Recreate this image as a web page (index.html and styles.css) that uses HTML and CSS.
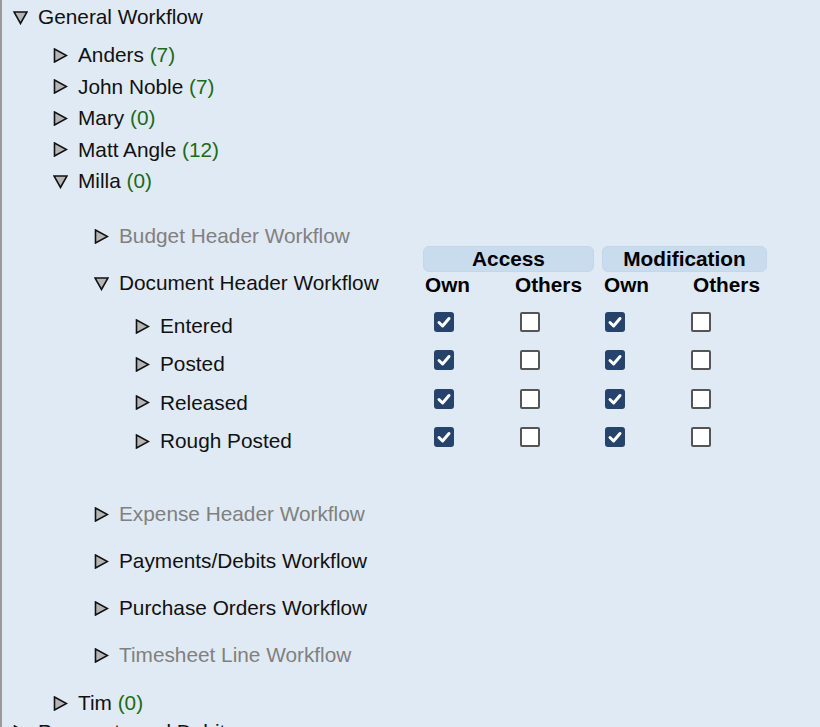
FILE: index.html
```html
<!DOCTYPE html>
<html>
<head>
<meta charset="utf-8">
<link rel="stylesheet" href="styles.css">
</head>
<body>
<div class="panel">
  <ul class="tree l0">
    <li class="node">
      <div class="row"><svg class="tw" viewBox="0 0 15 15"><polygon points="1,2 14,2 7.5,13.5"/></svg><span class="lbl">General Workflow</span></div>
      <ul class="tree l1">
        <li class="row"><svg class="tw" viewBox="0 0 15 15"><polygon points="1.5,1 1.5,14 13.5,7.5"/></svg><span class="lbl">Anders <span class="cnt">(7)</span></span></li>
        <li class="row"><svg class="tw" viewBox="0 0 15 15"><polygon points="1.5,1 1.5,14 13.5,7.5"/></svg><span class="lbl">John Noble <span class="cnt">(7)</span></span></li>
        <li class="row"><svg class="tw" viewBox="0 0 15 15"><polygon points="1.5,1 1.5,14 13.5,7.5"/></svg><span class="lbl">Mary <span class="cnt">(0)</span></span></li>
        <li class="row"><svg class="tw" viewBox="0 0 15 15"><polygon points="1.5,1 1.5,14 13.5,7.5"/></svg><span class="lbl">Matt Angle <span class="cnt">(12)</span></span></li>
        <li class="l1-node">
          <div class="row"><svg class="tw" viewBox="0 0 15 15"><polygon points="1,2 14,2 7.5,13.5"/></svg><span class="lbl">Milla <span class="cnt">(0)</span></span></div>
          <ul class="tree wf-list">
            <li class="row wf muted"><svg class="tw" viewBox="0 0 15 15"><polygon points="1.5,1 1.5,14 13.5,7.5"/></svg><span class="lbl">Budget Header Workflow</span></li>
            <li class="doc">
              <div class="spacer"></div>
              <div class="pill pill-access">Access</div>
              <div class="pill pill-mod">Modification</div>
              <div class="row doc-label"><svg class="tw" viewBox="0 0 15 15"><polygon points="1,2 14,2 7.5,13.5"/></svg><span class="lbl">Document Header Workflow</span></div>
              <div class="colhead">Own</div>
              <div class="colhead">Others</div>
              <div class="colhead">Own</div>
              <div class="colhead">Others</div>

              <div class="row state"><svg class="tw" viewBox="0 0 15 15"><polygon points="1.5,1 1.5,14 13.5,7.5"/></svg><span class="lbl">Entered</span></div>
              <div class="cell c1"><span class="cb on"><svg viewBox="0 0 20 20"><path d="M5 10.5 L8.6 14 L15 6.5"/></svg></span></div>
              <div class="cell c2"><span class="cb"></span></div>
              <div class="cell c3"><span class="cb on"><svg viewBox="0 0 20 20"><path d="M5 10.5 L8.6 14 L15 6.5"/></svg></span></div>
              <div class="cell c4"><span class="cb"></span></div>

              <div class="row state"><svg class="tw" viewBox="0 0 15 15"><polygon points="1.5,1 1.5,14 13.5,7.5"/></svg><span class="lbl">Posted</span></div>
              <div class="cell c1"><span class="cb on"><svg viewBox="0 0 20 20"><path d="M5 10.5 L8.6 14 L15 6.5"/></svg></span></div>
              <div class="cell c2"><span class="cb"></span></div>
              <div class="cell c3"><span class="cb on"><svg viewBox="0 0 20 20"><path d="M5 10.5 L8.6 14 L15 6.5"/></svg></span></div>
              <div class="cell c4"><span class="cb"></span></div>

              <div class="row state"><svg class="tw" viewBox="0 0 15 15"><polygon points="1.5,1 1.5,14 13.5,7.5"/></svg><span class="lbl">Released</span></div>
              <div class="cell c1"><span class="cb on"><svg viewBox="0 0 20 20"><path d="M5 10.5 L8.6 14 L15 6.5"/></svg></span></div>
              <div class="cell c2"><span class="cb"></span></div>
              <div class="cell c3"><span class="cb on"><svg viewBox="0 0 20 20"><path d="M5 10.5 L8.6 14 L15 6.5"/></svg></span></div>
              <div class="cell c4"><span class="cb"></span></div>

              <div class="row state"><svg class="tw" viewBox="0 0 15 15"><polygon points="1.5,1 1.5,14 13.5,7.5"/></svg><span class="lbl">Rough Posted</span></div>
              <div class="cell c1"><span class="cb on"><svg viewBox="0 0 20 20"><path d="M5 10.5 L8.6 14 L15 6.5"/></svg></span></div>
              <div class="cell c2"><span class="cb"></span></div>
              <div class="cell c3"><span class="cb on"><svg viewBox="0 0 20 20"><path d="M5 10.5 L8.6 14 L15 6.5"/></svg></span></div>
              <div class="cell c4"><span class="cb"></span></div>
            </li>
            <li class="row wf muted"><svg class="tw" viewBox="0 0 15 15"><polygon points="1.5,1 1.5,14 13.5,7.5"/></svg><span class="lbl">Expense Header Workflow</span></li>
            <li class="row wf"><svg class="tw" viewBox="0 0 15 15"><polygon points="1.5,1 1.5,14 13.5,7.5"/></svg><span class="lbl">Payments/Debits Workflow</span></li>
            <li class="row wf"><svg class="tw" viewBox="0 0 15 15"><polygon points="1.5,1 1.5,14 13.5,7.5"/></svg><span class="lbl">Purchase Orders Workflow</span></li>
            <li class="row wf muted"><svg class="tw" viewBox="0 0 15 15"><polygon points="1.5,1 1.5,14 13.5,7.5"/></svg><span class="lbl">Timesheet Line Workflow</span></li>
          </ul>
        </li>
        <li class="row"><svg class="tw" viewBox="0 0 15 15"><polygon points="1.5,1 1.5,14 13.5,7.5"/></svg><span class="lbl">Tim <span class="cnt">(0)</span></span></li>
      </ul>
    </li>
    <li class="row"><svg class="tw" viewBox="0 0 15 15"><polygon points="1.5,1 1.5,14 13.5,7.5"/></svg><span class="lbl">Payments and Debits</span></li>
  </ul>
</div>
</body>
</html>
```

FILE: styles.css
```css
html, body {
  margin: 0;
  padding: 0;
  height: 100%;
  overflow: hidden;
  background: #e0eaf4;
}

.panel {
  box-sizing: border-box;
  height: 727px;
  border-left: 2px solid #9a9a9a;
  padding: 5px 0 0 11px;
  font-family: "Liberation Sans", Arial, sans-serif;
  font-size: 20.8px;
  color: #111;
  overflow: hidden;
}

.tree {
  list-style: none;
  margin: 0;
  padding: 0;
}

.row {
  display: flex;
  align-items: center;
  height: 24px;
  line-height: 24px;
  white-space: nowrap;
}

.tw {
  width: 15px;
  height: 15px;
  flex: none;
  margin-right: 10px;
}
.tw polygon {
  fill: #b5b5b5;
  stroke: #111;
  stroke-width: 1.6;
  stroke-linejoin: miter;
}

.cnt {
  color: #1a6b1a;
}

.muted .lbl {
  color: #808080;
}

/* level 1 */
.l1 {
  padding: 6.5px 0 5px 40px;
}
.l1 > li {
  margin-top: 7.5px;
}

/* level 2: workflows */
.wf-list {
  padding: 8px 0 16.5px 41px;
}
.wf {
  margin-top: 23px;
}

/* expanded document workflow */
.doc {
  display: grid;
  grid-template-columns: 329px 90px 89px 89px 79px;
  grid-template-rows: 26px 31px repeat(4, 38.3px);
  margin-top: -2px;
  padding-bottom: 23px;
}

.spacer {
  grid-column: 1;
  grid-row: 1;
}

.pill {
  height: 26px;
  line-height: 24px;
  background: #c9dcee;
  border: 1px solid #c3d6ea;
  box-sizing: border-box;
  border-radius: 6px;
  text-align: center;
  font-weight: bold;
  color: #000;
}
.pill-access {
  grid-column: 2 / span 2;
  grid-row: 1;
  margin-right: 8px;
}
.pill-mod {
  grid-column: 4 / span 2;
  grid-row: 1;
  margin-right: 3px;
}

.doc-label {
  grid-column: 1;
  grid-row: 2;
  align-self: start;
  margin-top: -1px;
}

.colhead {
  grid-row: 2;
  align-self: start;
  margin-top: 1px;
  padding-left: 2px;
  font-weight: bold;
  line-height: 24px;
  color: #000;
}

.state {
  grid-column: 1;
  padding-left: 41px;
  align-self: center;
  margin-top: 8px;
}

.cell {
  display: flex;
  align-items: center;
}
.c1 { padding-left: 11px; }
.c2 { padding-left: 7px; }
.c3 { padding-left: 3px; }
.c4 { padding-left: 0; }

.cb {
  box-sizing: border-box;
  width: 20px;
  height: 20px;
  border: 2px solid #555;
  border-radius: 2px;
  background: #fff;
  display: block;
}
.cb.on {
  border: none;
  border-radius: 3px;
  background: #25436b;
}
.cb svg {
  display: block;
  width: 20px;
  height: 20px;
}
.cb path {
  fill: none;
  stroke: #fff;
  stroke-width: 3;
  stroke-linecap: round;
  stroke-linejoin: round;
}
```
